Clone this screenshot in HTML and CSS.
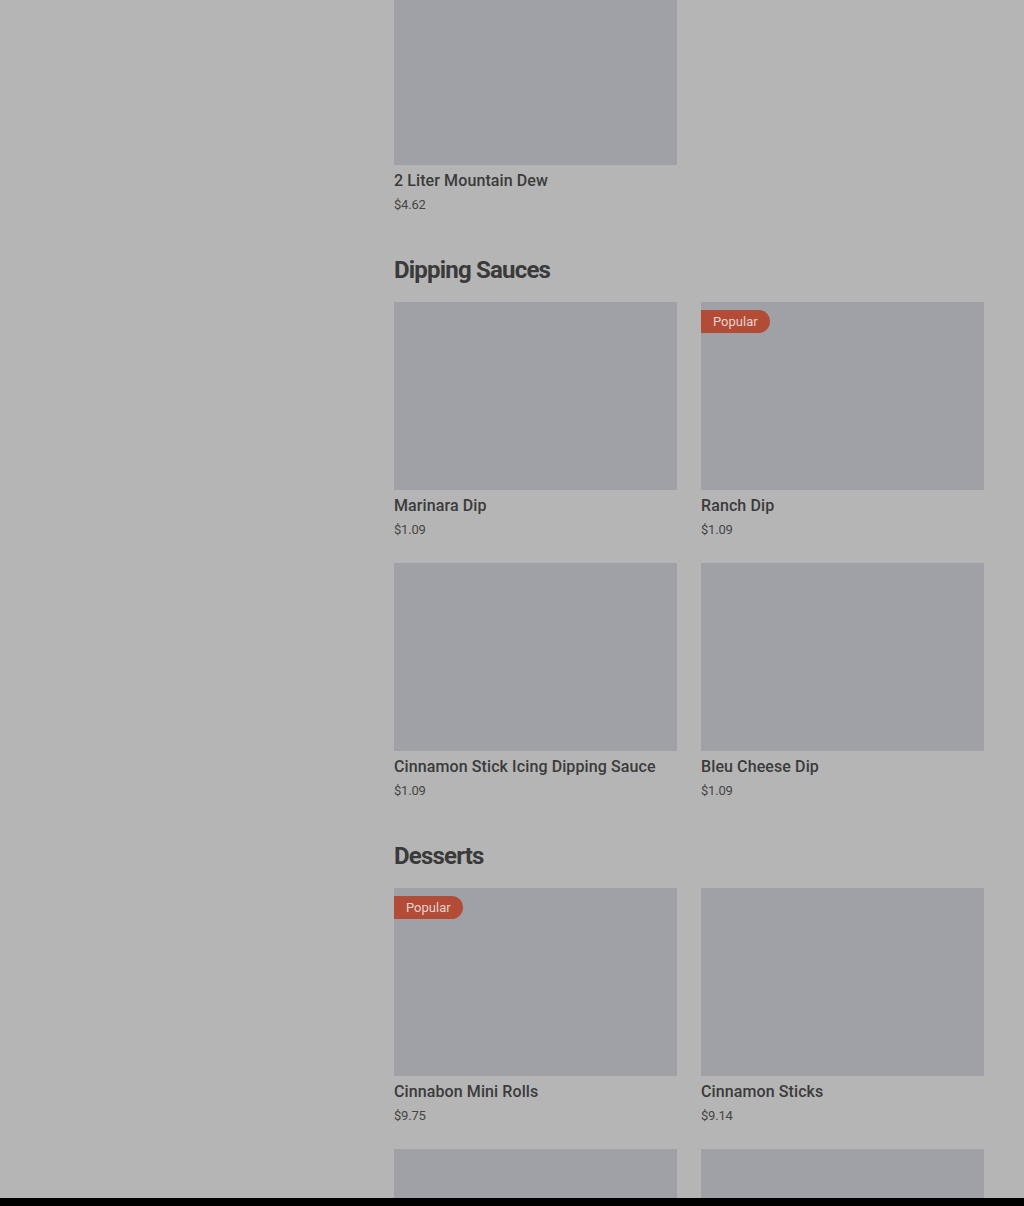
FILE: index.html
```html
<!DOCTYPE html>
<html lang="en">
<head>
    <meta charset="UTF-8">
    <meta name="viewport" content="width=device-width, initial-scale=1.0">
    <title>Menu</title>
    <link rel="stylesheet" href="styles.css">
</head>
<body>
    <div class="page">
        <aside class="sidebar"></aside>
        <main class="menu">
            <section class="category">
                <div class="items">
                    <div class="item">
                        <div class="photo"></div>
                        <div class="item-name">2 Liter Mountain Dew</div>
                        <div class="item-price">$4.62</div>
                    </div>
                </div>
            </section>

            <section class="category">
                <h2>Dipping Sauces</h2>
                <div class="items">
                    <div class="item">
                        <div class="photo"></div>
                        <div class="item-name">Marinara Dip</div>
                        <div class="item-price">$1.09</div>
                    </div>
                    <div class="item">
                        <div class="photo"><span class="badge">Popular</span></div>
                        <div class="item-name">Ranch Dip</div>
                        <div class="item-price">$1.09</div>
                    </div>
                    <div class="item">
                        <div class="photo"></div>
                        <div class="item-name">Cinnamon Stick Icing Dipping Sauce</div>
                        <div class="item-price">$1.09</div>
                    </div>
                    <div class="item">
                        <div class="photo"></div>
                        <div class="item-name">Bleu Cheese Dip</div>
                        <div class="item-price">$1.09</div>
                    </div>
                </div>
            </section>

            <section class="category">
                <h2>Desserts</h2>
                <div class="items">
                    <div class="item">
                        <div class="photo"><span class="badge">Popular</span></div>
                        <div class="item-name">Cinnabon Mini Rolls</div>
                        <div class="item-price">$9.75</div>
                    </div>
                    <div class="item">
                        <div class="photo"></div>
                        <div class="item-name">Cinnamon Sticks</div>
                        <div class="item-price">$9.14</div>
                    </div>
                    <div class="item">
                        <div class="photo"></div>
                    </div>
                    <div class="item">
                        <div class="photo"></div>
                    </div>
                </div>
            </section>
        </main>
    </div>
</body>
</html>
```

FILE: styles.css
```css
html {
    background-color: #000;
}
body {
    font-family: Roboto, "Liberation Sans", sans-serif;
    margin: 0;
    padding: 0;
    height: 1198px;
    overflow: hidden;
    background-color: #b5b5b5;
    color: #3b3b3b;
}
.page {
    display: flex;
    margin-top: -23px;
    padding-right: 40px;
}
.sidebar {
    width: 394px;
    flex-shrink: 0;
}
.menu {
    flex: 1;
}
.category {
    margin-bottom: 16px;
}
.category h2 {
    margin: 0 0 16px;
    font-size: 24px;
    line-height: 32px;
    font-weight: 700;
    letter-spacing: -0.8px;
    color: #3a3a3a;
}
.items {
    display: grid;
    grid-template-columns: 1fr 1fr;
    column-gap: 24px;
}
.item {
    margin-bottom: 24px;
}
.photo {
    position: relative;
    height: 188px;
    background-color: #9fa1a6;
}
.badge {
    position: absolute;
    top: 8px;
    left: 0;
    height: 23px;
    line-height: 23px;
    padding: 0 12px;
    font-size: 13px;
    color: #e6d3cf;
    background-color: #b24c37;
    border-radius: 0 12px 12px 0;
}
.item-name {
    margin-top: 5px;
    font-size: 16px;
    line-height: 22px;
    font-weight: 500;
    letter-spacing: 0.1px;
}
.item-price {
    margin-top: 4px;
    font-size: 13px;
    line-height: 18px;
    letter-spacing: -0.2px;
    color: #454545;
}
```
